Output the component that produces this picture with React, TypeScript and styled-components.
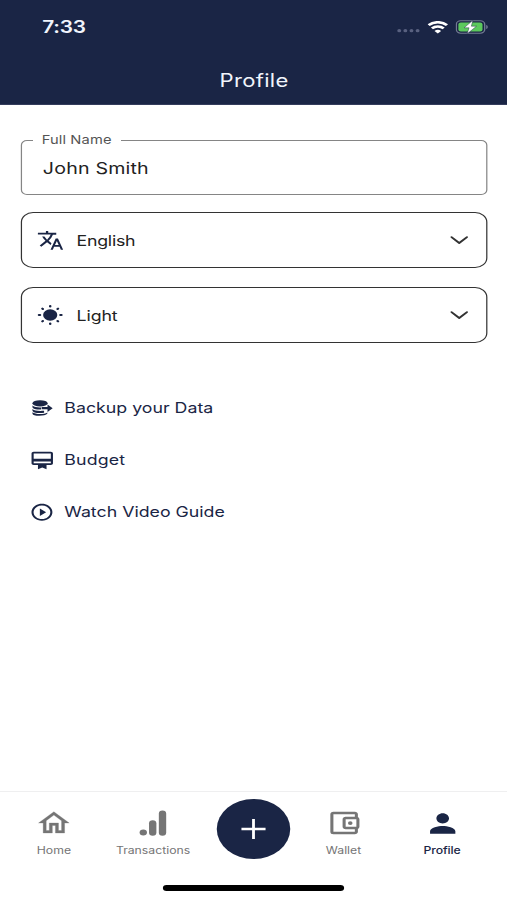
import React from 'react';
import styled, { createGlobalStyle } from 'styled-components';
import {
  MdTranslate,
  MdOutlineCardMembership,
  MdPlayCircleOutline,
  MdOutlineAccountBalanceWallet,
  MdPerson,
} from 'react-icons/md';

const NAVY = '#1a2545';
const GREY = '#757575';

const GlobalStyle = createGlobalStyle`
  * { box-sizing: border-box; }
  html, body { margin: 0; padding: 0; background: #fff; overflow: hidden; }
  body { font-family: Inter, "Liberation Sans", sans-serif; }
  svg { display: block; flex: none; }
`;

const Screen = styled.div`
  width: 414px;
  height: 900px;
  display: flex;
  flex-direction: column;
  background: #fff;
  transform: scaleX(1.22464);
  transform-origin: 0 0;
`;

const Header = styled.header`
  height: 105px;
  flex: none;
  background: ${NAVY};
  color: #f1f5fc;
  border-bottom: 1px solid #343c5c;
`;

const StatusBar = styled.div`
  height: 54px;
  padding: 0 15px 0 34.5px;
  display: flex;
  align-items: center;
  justify-content: space-between;
`;

const Text = styled.span<{ $size: number; $weight?: number; $spacing?: number; $color?: string }>`
  font-size: ${(p) => p.$size}px;
  font-weight: ${(p) => p.$weight ?? 400};
  letter-spacing: ${(p) => p.$spacing ?? 0}px;
  color: ${(p) => p.$color ?? 'inherit'};
  line-height: 1.2;
  white-space: nowrap;
`;

const StatusIcons = styled.div`
  display: flex;
  align-items: center;
  gap: 6px;
`;

const Title = styled.h1`
  margin: 0;
  height: 52px;
  padding: 2px 0 0 1px;
  display: flex;
  align-items: center;
  justify-content: center;
  font-weight: 400;
`;

const Main = styled.main`
  flex: 1;
  padding: 34px 16.5px 0 17px;
`;

const NameField = styled.fieldset`
  margin: 0;
  height: 62px;
  margin-top: -6px;
  padding: 0 17px;
  border: 1.3px solid #858585;
  border-radius: 5px;
  min-width: 0;
`;

const Legend = styled.legend`
  margin-left: -8px;
  padding: 0 8px 0 7px;
  height: 14px;
  display: flex;
  align-items: center;
`;

const NameValue = styled.div`
  height: 43px;
  display: flex;
  align-items: center;
`;

const Select = styled.button<{ $gap: number }>`
  width: 100%;
  height: 56px;
  margin-top: ${(p) => p.$gap}px;
  padding: 0 14px 0 11.5px;
  display: flex;
  align-items: center;
  background: #fff;
  border: 1.4px solid #333;
  border-radius: 10px;
  font-family: inherit;
  text-align: left;
  color: #222;
`;

const SelectIcon = styled.span`
  width: 33px;
  color: ${NAVY};
`;

const SelectLabel = styled.span`
  flex: 1;
  display: flex;
  padding-top: 1px;
`;

const Links = styled.nav`
  margin-top: 39px;
  color: ${NAVY};
`;

const LinkRow = styled.div`
  height: 52px;
  padding-left: 6.5px;
  display: flex;
  align-items: center;
`;

const LinkIcon = styled.span`
  width: 29px;
`;

const TabBar = styled.footer`
  height: 109px;
  flex: none;
  border-top: 1px solid #efeff0;
  display: flex;
  flex-direction: column;
  align-items: center;
`;

const Tabs = styled.div`
  width: 100%;
  height: 76px;
  padding: 0 4px;
  display: grid;
  grid-template-columns: 80px 82px 82px 65px 96px;
`;

const Tab = styled.div<{ $active?: boolean }>`
  display: flex;
  flex-direction: column;
  align-items: center;
  padding-top: 15px;
  color: ${(p) => (p.$active ? NAVY : GREY)};
`;

const TabIcon = styled.span`
  height: 32px;
  display: flex;
  align-items: center;
  margin-bottom: 5px;
`;

const AddButton = styled.button`
  width: 60px;
  height: 60px;
  margin: 7px auto 0;
  padding: 0;
  border: 0;
  border-radius: 50%;
  background: ${NAVY};
  display: flex;
  align-items: center;
  justify-content: center;
`;

const HomeIndicator = styled.div`
  width: 148px;
  height: 6px;
  margin-top: 17px;
  margin-left: 0.5px;
  border-radius: 3px;
  background: #000;
`;

const Chevron = () => (
  <svg width="16" height="10" viewBox="0 0 16 10" fill="none" stroke="#333" strokeWidth="1.7" strokeLinecap="round" strokeLinejoin="round">
    <path d="M1.7 2.2 8 8l6.3-5.8" />
  </svg>
);

const SunIcon = () => (
  <svg width="22" height="22" viewBox="0 0 22 22" fill={NAVY} stroke={NAVY} strokeWidth="2" strokeLinecap="round">
    <circle cx="11" cy="11" r="5.8" stroke="none" />
    <path d="M11 1.900v.7M11 19.400v.7M1.800 11h.9M19.300 11h.9M4.600 4.600l.4.4M17 17l.4.4M4.600 17.400l.4-.4M17 5l.4-.4" />
  </svg>
);

const DatabaseExportIcon = () => (
  <svg width="20" height="18" viewBox="0 0 20 18" fill={NAVY}>
    <ellipse cx="8.700" cy="4.300" rx="6.200" ry="3.100" />
    <path d="M2.500 6.500c1.600 1.700 4.200 2 7 1.900v2.200c-4 .1-7-.9-7-2.700z" />
    <path d="M2.500 10c1.600 1.800 5 2.200 9.500 1.800v2c-5.500.7-9.500-.4-9.500-2.400z" />
    <path d="M2.500 13.300c2.400 2.300 9.600 2.300 12.200.1v1.200c-1.700 3-12.200 3-12.200-.1z" />
    <path d="M10 8h4.800V5.400l4.200 3.800-4.200 3.800v-2.800H10z" />
  </svg>
);

const HomeIcon = () => (
  <svg width="30" height="30" viewBox="0 0 24 24" fill={GREY} stroke={GREY} strokeWidth=".2">
    <path d="m12 5.690 5 4.500V18h-2v-6H9v6H7v-7.810zM12 3 2 12h3v8h6v-6h2v6h6v-8h3z" />
  </svg>
);

const BarsIcon = () => (
  <svg width="24" height="28" viewBox="0 0 24 28" fill={GREY}>
    <circle cx="4" cy="23.400" r="3" />
    <rect x="8.700" y="11.200" width="6" height="15.500" rx="3" />
    <rect x="16.700" y="1.500" width="6" height="25.200" rx="3" />
  </svg>
);

const CellDots = () => (
  <svg width="20" height="12" viewBox="0 0 20 12" fill="#596180">
    <circle cx="3" cy="9.700" r="1.600" />
    <circle cx="8" cy="9.700" r="1.600" />
    <circle cx="13" cy="9.700" r="1.600" />
    <circle cx="18" cy="9.700" r="1.600" />
  </svg>
);

const WifiIcon = () => (
  <svg width="17" height="13" viewBox="0 0 17 13" fill="none" stroke="#fff" strokeWidth="2.500">
    <path d="M1 4.200c4.300-4 10.700-4 15 0" />
    <path d="M3.700 7.400c2.800-2.500 6.800-2.500 9.600 0" />
    <path d="M8.500 12.600 5.800 9.900c1.500-1.400 3.900-1.400 5.400 0z" fill="#fff" stroke="none" />
  </svg>
);

const BatteryIcon = () => (
  <svg width="27" height="14" viewBox="0 0 27 14">
    <rect x=".6" y=".8" width="23.200" height="12.400" rx="3.600" fill="none" stroke="#737b93" strokeWidth="1.100" />
    <rect x="2.300" y="2.500" width="19.700" height="9" rx="2" fill="#5cc95d" />
    <path d="M25 5v4c1.800-.7 1.800-3.300 0-4z" fill="#737b93" />
    <path d="M14.100.3 7 7.800h4l-1.500 6 7.600-7.600h-4.200z" fill="#fff" stroke={NAVY} strokeWidth=".4" />
  </svg>
);

const PlusIcon = () => (
  <svg width="20" height="22" viewBox="0 0 20 22" stroke="#fff" strokeWidth="2.300">
    <path d="M0 11h20M10 1v20" />
  </svg>
);

export default function App() {
  return (
    <>
      <GlobalStyle />
      <Screen>
        <Header>
          <StatusBar>
            <Text $size={17} $weight={600} $spacing={-0.2}>7:33</Text>
            <StatusIcons>
              <CellDots />
              <WifiIcon />
              <BatteryIcon />
            </StatusIcons>
          </StatusBar>
          <Title>
            <Text $size={18} $spacing={0.25}>Profile</Text>
          </Title>
        </Header>
        <Main>
          <NameField>
            <Legend>
              <Text $size={12} $spacing={0.1} $color="#555">Full Name</Text>
            </Legend>
            <NameValue>
              <Text $size={16} $spacing={0.15} $color="#222">John Smith</Text>
            </NameValue>
          </NameField>
          <Select $gap={17}>
            <SelectIcon><MdTranslate size={22.5} /></SelectIcon>
            <SelectLabel><Text $size={14.5} $spacing={-0.2}>English</Text></SelectLabel>
            <Chevron />
          </Select>
          <Select $gap={19}>
            <SelectIcon><SunIcon /></SelectIcon>
            <SelectLabel><Text $size={14.5} $spacing={-0.1}>Light</Text></SelectLabel>
            <Chevron />
          </Select>
          <Links>
            <LinkRow>
              <LinkIcon><DatabaseExportIcon /></LinkIcon>
              <Text $size={14.5}>Backup your Data</Text>
            </LinkRow>
            <LinkRow>
              <LinkIcon><MdOutlineCardMembership size={21} /></LinkIcon>
              <Text $size={14.5} $spacing={0.1}>Budget</Text>
            </LinkRow>
            <LinkRow>
              <LinkIcon><MdPlayCircleOutline size={20.5} /></LinkIcon>
              <Text $size={14.5}>Watch Video Guide</Text>
            </LinkRow>
          </Links>
        </Main>
        <TabBar>
          <Tabs>
            <Tab>
              <TabIcon><HomeIcon /></TabIcon>
              <Text $size={10}>Home</Text>
            </Tab>
            <Tab>
              <TabIcon><BarsIcon /></TabIcon>
              <Text $size={10}>Transactions</Text>
            </Tab>
            <AddButton aria-label="Add"><PlusIcon /></AddButton>
            <Tab>
              <TabIcon><MdOutlineAccountBalanceWallet size={30} /></TabIcon>
              <Text $size={10}>Wallet</Text>
            </Tab>
            <Tab $active>
              <TabIcon><MdPerson size={31} /></TabIcon>
              <Text $size={10} $weight={500} $spacing={-0.1}>Profile</Text>
            </Tab>
          </Tabs>
          <HomeIndicator />
        </TabBar>
      </Screen>
    </>
  );
}
